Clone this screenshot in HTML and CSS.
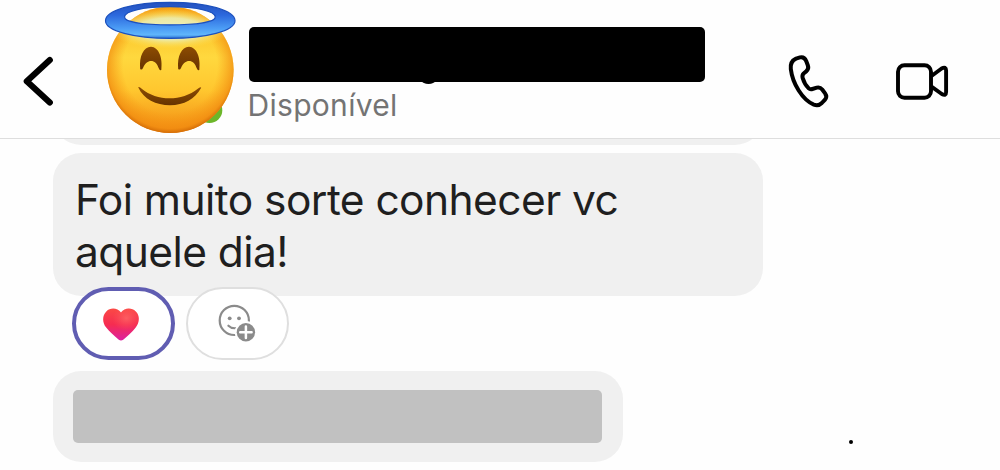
FILE: index.html
```html
<!DOCTYPE html>
<html lang="pt-BR">
<head>
<meta charset="utf-8">
<title>Chat</title>
<link rel="stylesheet" href="styles.css">
</head>
<body>
<div class="screen">
  <header class="header">
    <svg class="back" viewBox="20 50 40 64" aria-label="Voltar"><path d="M49.8 60 L26.8 81.3 L49.8 102.5"/></svg>
    <svg class="avatar" viewBox="100 0 140 138">
      <defs>
        <linearGradient id="face" x1="0" y1="0" x2="0" y2="1">
          <stop offset="0" stop-color="#f9b51c"/><stop offset=".4" stop-color="#ffd83e"/><stop offset=".66" stop-color="#ffc72f"/><stop offset="1" stop-color="#f28b12"/>
        </linearGradient>
        <radialGradient id="rim" cx=".5" cy=".47" r=".53">
          <stop offset=".7" stop-color="#f79411" stop-opacity="0"/><stop offset=".93" stop-color="#f18b10" stop-opacity=".7"/><stop offset="1" stop-color="#d26b06"/>
        </radialGradient>
        <radialGradient id="glow">
          <stop offset="0" stop-color="#eef2c4"/><stop offset=".55" stop-color="#ebedb0" stop-opacity=".9"/><stop offset="1" stop-color="#ffe14a" stop-opacity="0"/>
        </radialGradient>
        <linearGradient id="halo" x1="0" y1="0" x2="0" y2="1">
          <stop offset="0" stop-color="#2450bd"/><stop offset=".35" stop-color="#2c68dd"/><stop offset=".72" stop-color="#4b9cf5"/><stop offset=".9" stop-color="#60b6fb"/><stop offset="1" stop-color="#296fd2"/>
        </linearGradient>
        <linearGradient id="eye" x1="0" y1="0" x2="0" y2="1">
          <stop offset="0" stop-color="#8c4c03"/><stop offset="1" stop-color="#673300"/>
        </linearGradient>
        <clipPath id="head"><circle cx="170.3" cy="69.8" r="63.3"/></clipPath>
      </defs>
      <circle cx="209.5" cy="110.3" r="12.8" fill="#6cb629"/>
      <circle cx="170.3" cy="69.8" r="63.3" fill="url(#face)"/>
      <circle cx="170.3" cy="69.8" r="63.3" fill="url(#rim)"/>
      <ellipse cx="170" cy="29" rx="61" ry="20" fill="url(#glow)" clip-path="url(#head)"/>
      <path fill="url(#halo)" stroke="#1c50bd" stroke-width="1.2" fill-rule="evenodd" d="M170 2.3 C207 2.3 235 10.5 235 20.8 C235 31 206 38.4 170 38.4 C134 38.4 105.5 31 105.5 20.8 C105.5 10.5 133 2.3 170 2.3 Z M170 6.7 C144 6.7 124.5 11 124.5 17 C124.5 22 143 24.8 170 24.8 C197 24.8 215.3 22 215.3 17 C215.3 11 196 6.7 170 6.7 Z"/>
      <path fill="url(#eye)" d="M140.2 69 C139 56 143.5 47 151 46.7 C158.5 47 163 57 161.3 70 Q159.8 71 158.6 68 C156 58.5 146.5 58.5 143 68 Q141.8 70.5 140.2 69 Z M178.2 69 C177 56 181.5 47 189 46.7 C196.5 47 201 57 199.3 70 Q197.8 71 196.6 68 C194 58.5 184.5 58.5 181 68 Q179.8 70.5 178.2 69 Z"/>
      <path fill="url(#eye)" d="M138.2 87.2 Q139.4 86.4 141.7 88.7 C157 101.5 182 101.5 197.8 88.7 Q200.4 86.3 201.2 87.7 C195 99 184 105.2 170 105.2 C156 105.2 143.5 99 138.2 87.2 Z"/>
    </svg>
    <div class="contact">
      <div class="name"></div>
      <div class="status">Disponível</div>
    </div>
    <svg class="phone" viewBox="784 50 48 60" aria-label="Ligar"><path d="M796 58.6 L800 57.4 Q804.3 56.4 806.2 61 L807.8 65.3 Q809.2 69 806.2 71.4 L803.6 73.5 Q802 75 802.6 77.8 C803.8 82 806 85.8 808.7 88.4 Q810.2 89.8 812.4 89 L816.8 87.7 Q820 86.8 822.2 89.5 L825.1 93.4 Q827.5 96.8 824.8 99.8 L821.8 103 Q818.5 106.3 813.8 104.6 C802.5 100 792.5 83.5 790.8 69 Q790 61.3 796 58.6 Z"/></svg>
    <svg class="video" viewBox="892 58 60 48" aria-label="Vídeo"><rect x="898" y="65.2" width="33" height="32.5" rx="6.5"/><path d="M931.5 76 L941.6 68.5 Q946.1 66 946.1 70.6 V91.9 Q946.1 96.5 941.8 94 L931.5 86.7"/></svg>
  </header>

  <main class="messages">
    <div class="bubble previous"></div>
    <div class="bubble message">Foi muito sorte conhecer vc<br>aquele dia!</div>
    <div class="reactions">
      <div class="pill selected">
        <svg class="heart" viewBox="100 305 42 40">
          <defs>
            <linearGradient id="heart" x1="0" y1="0" x2="0" y2="1"><stop offset="0" stop-color="#fb4945"/><stop offset=".5" stop-color="#f62c51"/><stop offset="1" stop-color="#dc20a1"/></linearGradient>
            <radialGradient id="shine" cx=".65" cy=".3" r=".4"><stop offset="0" stop-color="#ff7770" stop-opacity=".6"/><stop offset="1" stop-color="#ff5a60" stop-opacity="0"/></radialGradient>
          </defs>
          <path fill="url(#heart)" d="M121 313.5 C117.5 308.8 110.5 308.3 106.3 312.4 C102.1 316.6 102.2 323.4 106.2 328.6 C109.7 333 114.2 337 118.8 340.7 Q121 342.2 123.2 340.7 C128 337 132.3 333 135.7 328.6 C139.8 323.2 140 316.3 135.8 312.4 C131.4 308.3 124.5 308.8 121 313.5 Z"/>
          <path fill="url(#shine)" d="M121 313.5 C117.5 308.8 110.5 308.3 106.3 312.4 C102.1 316.6 102.2 323.4 106.2 328.6 C109.7 333 114.2 337 118.8 340.7 Q121 342.2 123.2 340.7 C128 337 132.3 333 135.7 328.6 C139.8 323.2 140 316.3 135.8 312.4 C131.4 308.3 124.5 308.8 121 313.5 Z"/>
        </svg>
      </div>
      <div class="pill">
        <svg class="add" viewBox="216 302 42 42">
          <circle class="outline" cx="234.3" cy="320.4" r="14.6"/>
          <circle cx="229.7" cy="318.3" r="1.9"/><circle cx="239" cy="318.3" r="1.9"/>
          <path class="outline" d="M228.4 325.7 Q231.3 328.6 236 328.2"/>
          <circle cx="245.9" cy="332.3" r="11.2" fill="#fff"/>
          <circle cx="245.9" cy="332.3" r="9.2"/>
          <path class="plus" d="M245.9 326.6 V338 M240.2 332.3 H251.6"/>
        </svg>
      </div>
    </div>
    <div class="last-row">
      <div class="bubble hidden-message"><div class="redaction"></div></div>
      <i class="dot"></i>
    </div>
  </main>
</div>
</body>
</html>
```

FILE: styles.css
```css
* { box-sizing: border-box; }
body { margin: 0; background: #fff; font-family: Inter, "Liberation Sans", sans-serif; }
svg { display: block; flex: none; }
.screen { width: 1000px; height: 470px; overflow: hidden; background: #fefefe; }
.header { height: 139px; display: flex; align-items: flex-start; border-bottom: 1px solid #dedede; padding-left: 20px; }
.back { width: 40px; height: 64px; margin-top: 50px; fill: none; stroke: #000; stroke-width: 6.2; stroke-linecap: round; stroke-linejoin: round; }
.avatar { width: 140px; height: 138px; margin-left: 40px; }
.contact { width: 456px; margin: 27px 0 0 9px; }
.name { height: 55px; border-radius: 5px; background: #000; position: relative; }
.name::after { content: ""; position: absolute; left: 173px; bottom: -2px; width: 13px; height: 6px; border-radius: 50%; background: #000; }
.status { margin: 4px 0 0 -1.5px; font-size: 30px; line-height: 38px; letter-spacing: .3px; color: #747474; white-space: nowrap; }
.phone { width: 48px; height: 60px; margin: 50px 0 0 79px; fill: none; stroke: #000; stroke-width: 4; stroke-linejoin: round; }
.video { width: 60px; height: 48px; margin: 58px 0 0 60px; fill: none; stroke: #000; stroke-width: 3.9; stroke-linejoin: round; }
.messages { padding-left: 53px; }
.bubble { background: #f0f0f0; border-radius: 28px; }
.previous { width: 710px; height: 6px; clip-path: inset(0); background: none; position: relative; }
.previous::before { content: ""; position: absolute; left: 0; right: 0; bottom: 0; height: 80px; border-radius: 28px; background: #f0f0f0; }
.message { width: 710px; height: 143px; margin-top: 8px; padding: 21px 22px 0; color: #1f1f1f; font-size: 42.5px; line-height: 52px; letter-spacing: -.57px; white-space: nowrap; }
.reactions { display: flex; gap: 11px; margin: -9px 0 0 19px; position: relative; }
.pill { width: 103px; height: 73px; border: 2px solid #dfdfdf; border-radius: 37px; background: #fff; display: flex; align-items: center; justify-content: center; }
.pill.selected { border: 4px solid #605db2; }
.heart { width: 42px; height: 40px; margin: 1px 0 0 -5px; }
.add { width: 42px; height: 42px; margin: -1px 0 0 -2px; fill: #8b8b8b; }
.outline { fill: none; stroke: #8b8b8b; stroke-width: 2.2; stroke-linecap: round; }
.plus { stroke: #fff; stroke-width: 2.5; stroke-linecap: round; }
.last-row { display: flex; align-items: flex-start; margin-top: 11px; }
.hidden-message { width: 570px; height: 91px; padding: 19px 20px; }
.redaction { width: 529px; height: 53px; border-radius: 5px; background: #c1c1c1; }
.dot { width: 4px; height: 4px; border-radius: 50%; background: #000; margin: 69px 0 0 226px; }
```
